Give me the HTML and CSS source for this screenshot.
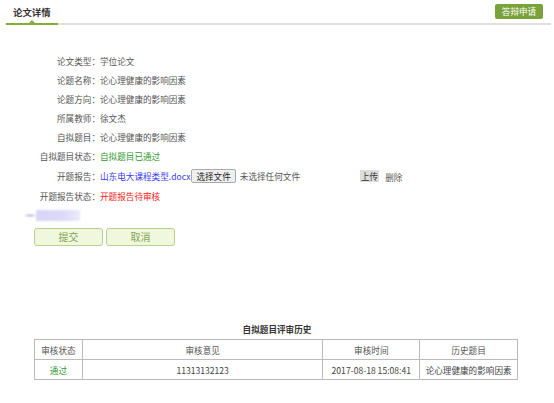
FILE: index.html
```html
<!DOCTYPE html>
<html lang="zh">
<head>
<meta charset="utf-8">
<link rel="stylesheet" href="styles.css">
</head>
<body>
<div class="page">
  <div class="header">
    <div class="tab">论文详情<span class="caret"></span></div>
    <button class="apply">答辩申请</button>
  </div>
  <div class="form">
    <div class="row"><span class="label">论文类型：</span><span class="value">学位论文</span></div>
    <div class="row"><span class="label">论题名称：</span><span class="value">论心理健康的影响因素</span></div>
    <div class="row"><span class="label">论题方向：</span><span class="value">论心理健康的影响因素</span></div>
    <div class="row"><span class="label">所属教师：</span><span class="value">徐文杰</span></div>
    <div class="row"><span class="label">自拟题目：</span><span class="value">论心理健康的影响因素</span></div>
    <div class="row"><span class="label">自拟题目状态：</span><span class="value ok">自拟题目已通过</span></div>
    <div class="row file-row"><span class="label">开题报告：</span><span class="value file-value"><a class="doc">山东电大课程类型.docx</a><span class="choose">选择文件</span><span class="nofile">未选择任何文件</span><span class="upload">上传</span><span class="del">删除</span></span></div>
    <div class="row status-row"><span class="label">开题报告状态：</span><span class="value pending">开题报告待审核</span></div>
    <div class="blur"><span class="dash"></span><span class="blk"></span></div>
    <div class="actions">
      <button class="btn">提交</button>
      <button class="btn">取消</button>
    </div>
  </div>
  <div class="history">
    <div class="h-title">自拟题目评审历史</div>
    <table class="tbl">
      <thead>
        <tr><th class="c1">审核状态</th><th class="c2">审核意见</th><th class="c3">审核时间</th><th class="c4">历史题目</th></tr>
      </thead>
      <tbody>
        <tr><td class="ok">通过</td><td>11313132123</td><td>2017-08-18 15:08:41</td><td>论心理健康的影响因素</td></tr>
      </tbody>
    </table>
  </div>
</div>
</body>
</html>
```
FILE: styles.css
```css
* { box-sizing: border-box; }
html, body { margin: 0; padding: 0; background: #fff; }
body {
  font-family: "Noto Sans CJK SC", "Noto Sans", sans-serif;
  font-size: 8.6px;
  color: #555;
  width: 554px;
  height: 403px;
  overflow: hidden;
}
.page { width: 554px; }
.header {
  height: 25px;
  margin: 0 3px 0 6px;
  border-bottom: 2px solid #e0e0e0;
  display: flex;
  justify-content: space-between;
  align-items: flex-start;
  position: relative;
}
.tab {
  width: 52px;
  height: 25px;
  padding: 6px 0 0 7px;
  font-weight: bold;
  font-size: 9.4px;
  color: #333;
  border-bottom: 2px solid #7fae3c;
  margin-bottom: -2px;
  position: relative;
  line-height: 13px;
}
.caret {
  position: absolute;
  left: 23px;
  bottom: 0;
  width: 0; height: 0;
  border-left: 3px solid transparent;
  border-right: 3px solid transparent;
  border-bottom: 3px solid #7fae3c;
}
.apply {
  margin: 4px 8px 0 0;
  width: 48px;
  height: 15px;
  padding: 0;
  border: none;
  border-radius: 2px;
  background: #7aa23a;
  color: #fff;
  font-family: inherit;
  font-size: 8.6px;
  line-height: 15px;
}
.form { padding-top: 26px; }
.row {
  display: flex;
  align-items: center;
  height: 19px;
}
.label {
  width: 100px;
  text-align: right;
  color: #555;
}
.value { color: #555; }
.ok { color: #2f9a2f; }
.pending { color: #ff1a1a; }
.file-row { height: 21px; margin-top: 0; }
.file-value { display: flex; align-items: center; }
.doc { color: #3a3aff; }
.choose {
  margin-left: 1px;
  height: 14px;
  padding: 0 4px;
  border: 1px solid #aaa;
  border-radius: 2px;
  background: #efefef;
  color: #222;
  line-height: 12px;
}
.nofile { margin-left: 4px; color: #555; }
.upload {
  margin-left: 60px;
  background: #ddd;
  color: #333;
  padding: 0 1px;
  line-height: 12px;
}
.del { margin-left: 6px; color: #555; margin-top: 3px; }
.blur {
  margin: 4px 0 0 8px;
  height: 12px;
  width: 72px;
  display: flex;
  align-items: center;
  filter: blur(1.2px);
}
.dash {
  width: 8px;
  height: 1px;
  background: #7a72c8;
  margin: 0 2px 0 18px;
}
.blk {
  flex: 1;
  height: 11px;
  background: linear-gradient(90deg, #d8d4f6, #dcd9f8 60%, #ecebfb);
}
.actions {
  margin: 7px 0 0 34px;
  display: flex;
  gap: 3px;
}
.btn {
  width: 69px;
  height: 18px;
  padding: 0;
  border: 1px solid #b8d08e;
  border-radius: 3px;
  background: #eff8dd;
  color: #86a35a;
  font-family: inherit;
  font-size: 10px;
  line-height: 16px;
}
.history { margin-top: 76px; }
.h-title {
  text-align: center;
  font-weight: bold;
  color: #333;
  height: 15px;
  line-height: 15px;
  padding-left: 0;
}
.tbl {
  margin: 2px 0 0 34px;
  width: 484px;
  border-collapse: collapse;
  color: #555;
}
.tbl th, .tbl td {
  border: 1px solid #bbb;
  height: 20px;
  padding: 0 3px;
  font-weight: normal;
  text-align: center;
}
.tbl th { color: #555; }
.tbl td { color: #444; }
.tbl td.ok { color: #2f9a2f; }
.c1 { width: 48px; }
.c2 { width: 241px; }
.c3 { width: 97px; }
.c4 { width: 98px; }
```
